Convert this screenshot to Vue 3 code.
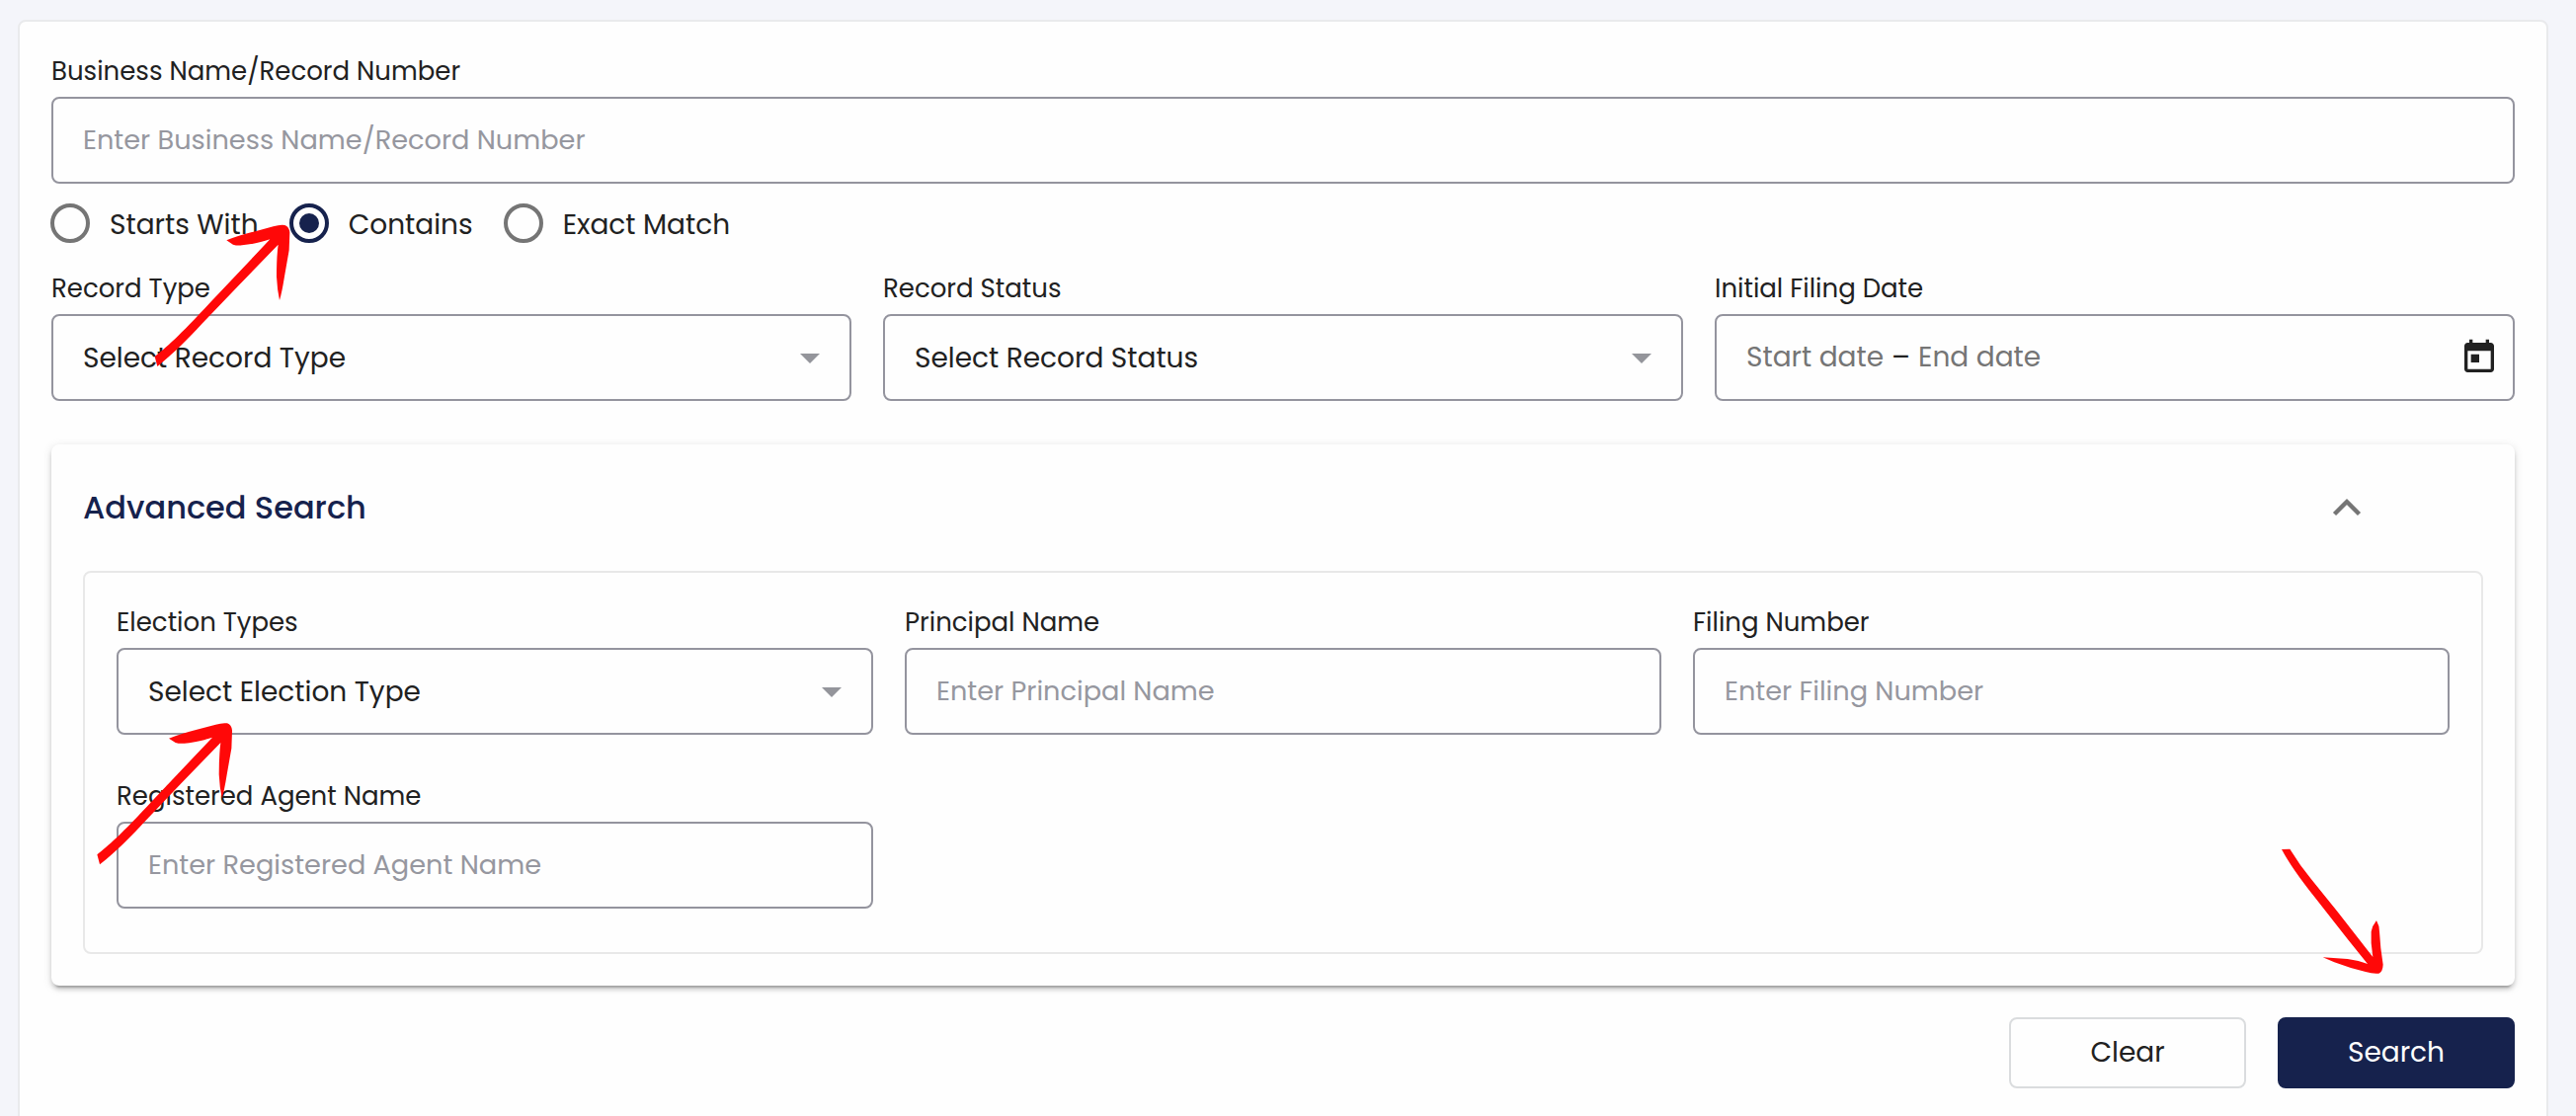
<script setup>
import { reactive } from 'vue'

const modes = [
  { id: 'starts', label: 'Starts With' },
  { id: 'contains', label: 'Contains' },
  { id: 'exact', label: 'Exact Match' },
]

const filters = [
  { label: 'Record Type', text: 'Select Record Type', kind: 'select' },
  { label: 'Record Status', text: 'Select Record Status', kind: 'select' },
  { label: 'Initial Filing Date', kind: 'date' },
]

const advanced = [
  { label: 'Election Types', text: 'Select Election Type', kind: 'select' },
  { label: 'Principal Name', text: 'Enter Principal Name', kind: 'input' },
  { label: 'Filing Number', text: 'Enter Filing Number', kind: 'input' },
  { label: 'Registered Agent Name', text: 'Enter Registered Agent Name', kind: 'input' },
]

const form = reactive({ mode: 'contains' })
</script>

<template>
  <div class="page">
    <main class="card">
      <div class="field">
        <label class="label">Business Name/Record Number</label>
        <div class="box placeholder"><span>Enter Business Name/Record Number</span></div>
      </div>

      <div class="modes">
        <div v-for="m in modes" :key="m.id" class="mode" @click="form.mode = m.id">
          <span class="radio" :class="{ on: form.mode === m.id }"></span>
          <span class="mode-text">{{ m.label }}</span>
        </div>
      </div>

      <div class="grid">
        <div v-for="f in filters" :key="f.label" class="field">
          <label class="label">{{ f.label }}</label>
          <div v-if="f.kind === 'select'" class="box select">
            <span>{{ f.text }}</span>
            <i class="caret"></i>
          </div>
          <div v-else class="box date">
            <span class="start">Start date</span>
            <span class="dash">–</span>
            <span class="end">End date</span>
            <svg class="calendar" viewBox="0 0 24 24">
              <path d="M19 3h-1V1h-2v2H8V1H6v2H5c-1.11 0-1.99.9-1.99 2L3 19c0 1.1.89 2 2 2h14c1.1 0 2-.9 2-2V5c0-1.1-.9-2-2-2zm0 16H5V8h14v11zM7 10h5v5H7z" />
            </svg>
          </div>
        </div>
      </div>

      <section class="panel">
        <header class="panel-head">
          <h2>Advanced Search</h2>
          <svg class="chevron" viewBox="0 0 28 17">
            <path d="M1.5 15.5 14 3l12.5 12.5" />
          </svg>
        </header>
        <div class="panel-body grid">
          <div v-for="f in advanced" :key="f.label" class="field">
            <label class="label">{{ f.label }}</label>
            <div class="box" :class="f.kind === 'input' ? 'placeholder' : 'select'">
              <span>{{ f.text }}</span>
              <i v-if="f.kind === 'select'" class="caret"></i>
            </div>
          </div>
        </div>
      </section>

      <div class="actions">
        <button class="btn clear">Clear</button>
        <button class="btn search">Search</button>
      </div>
    </main>

    <svg class="marks" viewBox="0 0 2608 1130">
      <defs>
        <path
          id="arrow"
          d="M80 543C115 515 150 485 250 377L430 187C410 193 385 201 345 205Q331 207 318 203L298 190Q330 177 380 164L440 148Q460 142 475 144Q488 148 490 166L488 220L474 300Q466 350 459 372Q452 340 450 300Q450 240 455 203L330 332L225 442C180 490 140 532 88 573Z"
        />
      </defs>
      <use href="#arrow" transform="translate(130 180) scale(.33333)" />
      <use href="#arrow" transform="translate(71.7 684.3) scale(.33333)" />
      <path
        transform="translate(2300 840) scale(.33333)"
        d="M30 60L55 59Q85 108 120 151L200 250L307 387L302 345V310Q305 292 318 276Q327 292 327 310L331 360L338 410Q337 432 325 437Q308 439 285 432L240 420L190 403L155 388L230 393Q265 398 291 408L230 332L130 205Q60 117 30 60Z"
      />
    </svg>
  </div>
</template>

<style>
body {
  background: #f4f5fa;
}
</style>

<style scoped>
.page {
  position: relative;
  box-sizing: border-box;
  width: 2608px;
  height: 1130px;
  padding: 20px 28px 0 18px;
  overflow: hidden;
  background: #f4f5fa;
  color: #212121;
  font-family: Poppins, Inter, sans-serif;
}

.card {
  box-sizing: border-box;
  height: 1180px;
  padding: 32px 32px 0;
  border: 2px solid #e9eaec;
  border-radius: 8px;
  background: #fefefe;
}

.field {
  display: flex;
  flex-direction: column;
}

.label {
  height: 36px;
  margin-bottom: 8px;
  font-size: 26px;
  line-height: 36px;
  white-space: nowrap;
}

.box {
  display: flex;
  align-items: center;
  justify-content: space-between;
  box-sizing: border-box;
  height: 88px;
  padding: 0 30px;
  border: 2px solid #94949e;
  border-radius: 8px;
  font-size: 28px;
  line-height: 40px;
  white-space: nowrap;
}

.select {
  padding-top: 2px;
}

.placeholder {
  color: #96979f;
  font-size: 27.2px;
}

.caret {
  border: 10px solid transparent;
  border-top-color: #94959b;
  border-bottom: 0;
}

.modes {
  display: flex;
  gap: 31px;
  height: 40px;
  margin: 20px 0 28px -1px;
}

.mode {
  display: flex;
  align-items: center;
  flex: none;
  gap: 20px;
}

.radio {
  display: flex;
  flex: none;
  align-items: center;
  justify-content: center;
  box-sizing: border-box;
  width: 40px;
  height: 40px;
  border: 4px solid #757575;
  border-radius: 50%;
}

.radio.on {
  border-color: #16224d;
}

.radio.on::after {
  content: "";
  width: 20px;
  height: 20px;
  border-radius: 50%;
  background: #16224d;
}

.mode-text {
  padding-top: 3px;
  font-size: 28px;
  line-height: 40px;
  white-space: nowrap;
}

.grid {
  display: grid;
  grid-template-columns: repeat(3, minmax(0, 1fr));
  gap: 44px 32px;
}

.date {
  justify-content: flex-start;
  gap: 8px;
  padding-right: 14px;
  padding-bottom: 1px;
  color: #757575;
}

.dash {
  color: #212121;
}

.calendar {
  width: 40px;
  height: 40px;
  margin-left: auto;
  fill: #212121;
}

.panel {
  box-sizing: border-box;
  height: 548px;
  margin-top: 44px;
  padding: 0 32px 32px;
  border-radius: 8px;
  background: #fefefe;
  box-shadow:
    0 6px 2px -4px rgba(0, 0, 0, 0.2),
    0 4px 4px 0 rgba(0, 0, 0, 0.14),
    0 2px 10px 0 rgba(0, 0, 0, 0.12);
}

.panel-head {
  display: flex;
  align-items: center;
  justify-content: space-between;
  height: 128px;
  padding-right: 124px;
}

.panel-head h2 {
  margin: 0;
  color: #16224d;
  font-size: 32px;
  font-weight: 500;
  line-height: 48px;
}

.chevron {
  width: 28px;
  height: 17px;
  margin-bottom: 2px;
  overflow: visible;
  fill: none;
  stroke: #757575;
  stroke-width: 4.4;
}

.panel-body {
  box-sizing: border-box;
  height: 388px;
  padding: 32px 32px 0;
  border: 2px solid #e8e8e8;
  border-radius: 8px;
  align-content: start;
}

.actions {
  display: flex;
  justify-content: flex-end;
  gap: 32px;
  margin-top: 32px;
}

.btn {
  box-sizing: border-box;
  width: 240px;
  height: 72px;
  padding: 0;
  border: 2px solid #dadcde;
  border-radius: 8px;
  background: #fefefe;
  color: #212121;
  font: 400 28px/40px Poppins, Inter, sans-serif;
}

.search {
  border-color: #16224d;
  background: #16224d;
  color: #fff;
}

.marks {
  position: absolute;
  inset: 0;
  width: 2608px;
  height: 1130px;
  fill: #ff0808;
  pointer-events: none;
}
</style>
